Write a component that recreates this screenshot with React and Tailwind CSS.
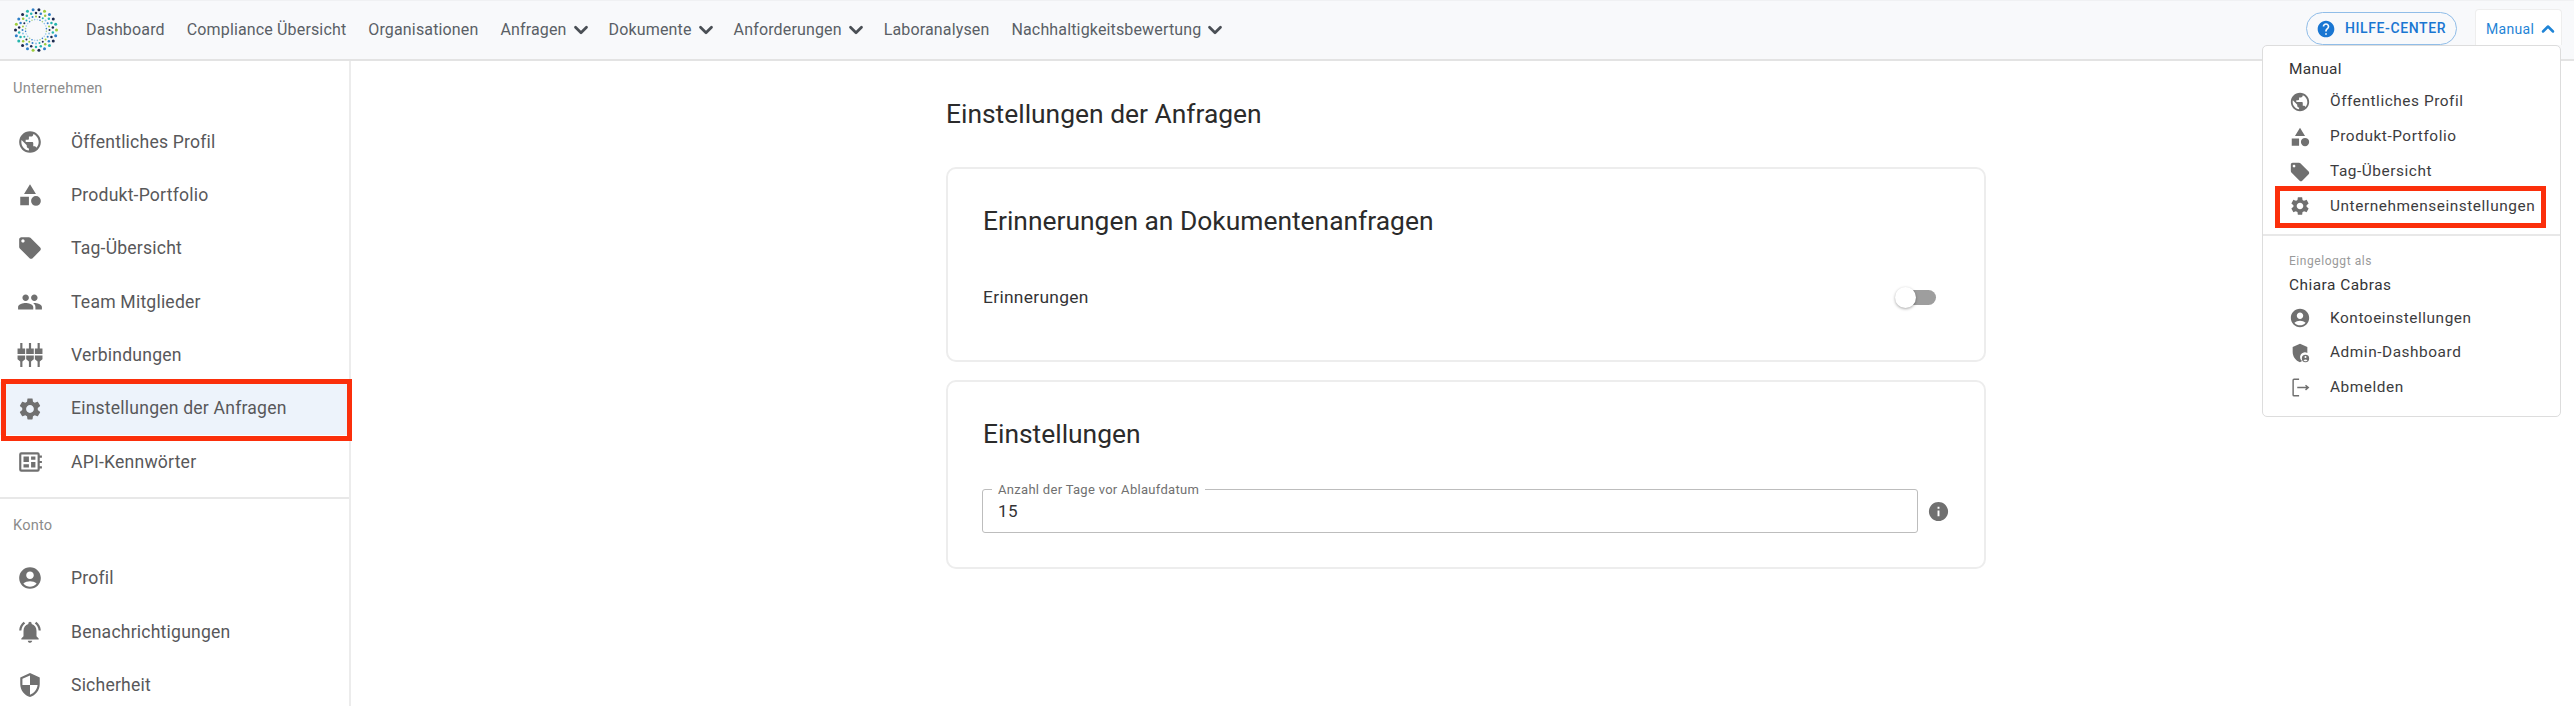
import React from "react";
import { ChevronDown, ChevronUp } from "lucide-react";

const paths = {
  globe: "M12 2C6.48 2 2 6.48 2 12s4.48 10 10 10 10-4.48 10-10S17.52 2 12 2zm-1 17.93c-3.95-.49-7-3.85-7-7.93 0-.62.08-1.21.21-1.79L9 15v1c0 1.1.9 2 2 2v1.93zm6.9-2.54c-.26-.81-1-1.39-1.9-1.39h-1v-3c0-.55-.45-1-1-1H8v-2h2c.55 0 1-.45 1-1V7h2c1.1 0 2-.9 2-2v-.41c2.93 1.19 5 4.06 5 7.41 0 2.08-.8 3.97-2.1 5.39z",
  category: "M12 2l-5.5 9h11zM17.5 13a4.5 4.5 0 1 0 0 9 4.5 4.5 0 0 0 0-9zM3 13.5h8v8H3z",
  tag: "M21.41 11.58l-9-9C12.05 2.22 11.55 2 11 2H4c-1.1 0-2 .9-2 2v7c0 .55.22 1.05.59 1.42l9 9c.36.36.86.58 1.41.58.55 0 1.05-.22 1.41-.59l7-7c.37-.36.59-.86.59-1.41 0-.55-.23-1.06-.59-1.42zM5.5 7C4.67 7 4 6.33 4 5.5S4.67 4 5.5 4 7 4.67 7 5.5 6.33 7 5.5 7z",
  people: "M16 11c1.66 0 2.99-1.34 2.99-3S17.66 5 16 5c-1.66 0-3 1.34-3 3s1.34 3 3 3zm-8 0c1.66 0 2.99-1.34 2.99-3S9.66 5 8 5C6.34 5 5 6.34 5 8s1.34 3 3 3zm0 2c-2.33 0-7 1.17-7 3.5V19h14v-2.5c0-2.33-4.67-3.5-7-3.5zm8 0c-.29 0-.62.02-.97.05 1.16.84 1.97 1.97 1.97 3.45V19h6v-2.5c0-2.33-4.67-3.5-7-3.5z",
  gear: "M19.14 12.94c.04-.3.06-.61.06-.94 0-.32-.02-.64-.07-.94l2.03-1.58c.18-.14.23-.41.12-.61l-1.92-3.32c-.12-.22-.37-.29-.59-.22l-2.39.96c-.5-.38-1.03-.7-1.62-.94l-.36-2.54c-.04-.24-.24-.41-.48-.41h-3.84c-.24 0-.43.17-.47.41l-.36 2.54c-.59.24-1.13.57-1.62.94l-2.39-.96c-.22-.08-.47 0-.59.22L2.74 8.87c-.12.21-.08.47.12.61l2.03 1.58c-.05.3-.09.63-.09.94s.02.64.07.94l-2.03 1.58c-.18.14-.23.41-.12.61l1.92 3.32c.12.22.37.29.59.22l2.39-.96c.5.38 1.03.7 1.62.94l.36 2.54c.05.24.24.41.48.41h3.84c.24 0 .44-.17.47-.41l.36-2.54c.59-.24 1.13-.56 1.62-.94l2.39.96c.22.08.47 0 .59-.22l1.92-3.32c.12-.22.07-.47-.12-.61l-2.01-1.58zM12 15.6c-1.98 0-3.6-1.62-3.6-3.6s1.62-3.6 3.6-3.6 3.6 1.62 3.6 3.6-1.62 3.6-3.6 3.6z",
  account: "M12 2C6.48 2 2 6.48 2 12s4.48 10 10 10 10-4.48 10-10S17.52 2 12 2zm0 4c1.93 0 3.5 1.57 3.5 3.5S13.93 13 12 13s-3.5-1.57-3.5-3.5S10.07 6 12 6zm0 14c-2.03 0-4.43-.82-6.14-2.88C7.55 15.8 9.68 15 12 15s4.45.8 6.14 2.12C16.43 19.18 14.03 20 12 20z",
  bell: "M7.58 4.08L6.15 2.65C3.75 4.48 2.17 7.3 2.03 10.5h2c.15-2.65 1.51-4.97 3.55-6.42zm12.39 6.42h2c-.15-3.2-1.73-6.02-4.12-7.85l-1.42 1.43c2.02 1.45 3.39 3.77 3.54 6.42zM18 11c0-3.07-1.64-5.64-4.5-6.32V4c0-.83-.67-1.5-1.5-1.5s-1.5.67-1.5 1.5v.68C7.63 5.36 6 7.92 6 11v5l-2 2v1h16v-1l-2-2v-5zm-6 11c.14 0 .27-.01.4-.04.65-.14 1.18-.58 1.44-1.18.1-.24.15-.5.15-.78h-4c.01 1.1.9 2 2.01 2z",
  shield: "M12 1L3 5v6c0 5.55 3.84 10.74 9 12 5.16-1.26 9-6.45 9-12V5l-9-4zm0 10.99h7c-.53 4.12-3.28 7.79-7 8.94V12H5V6.3l7-3.11v8.8z",
  help: "M12 2C6.48 2 2 6.48 2 12s4.48 10 10 10 10-4.48 10-10S17.52 2 12 2zm1 17h-2v-2h2v2zm2.07-7.75l-.9.92C13.45 12.9 13 13.5 13 15h-2v-.5c0-1.1.45-2.1 1.17-2.83l1.24-1.26c.37-.36.59-.86.59-1.41 0-1.1-.9-2-2-2s-2 .9-2 2H8c0-2.21 1.79-4 4-4s4 1.79 4 4c0 .88-.36 1.68-.93 2.25z",
  info: "M12 2C6.48 2 2 6.48 2 12s4.48 10 10 10 10-4.48 10-10S17.52 2 12 2zm1 15h-2v-6h2v6zm0-8h-2V7h2v2z",
  sliders: "M3 1h2v5h2.500v5H.5V6H3zM11 1h2v5h2.500v5h-7V6H11zM19 1h2v5h2.500v5h-7V6H19zM.5 12.500h7V16L5 18v5H3v-5L.5 16zM8.500 12.500h7V16L13 18v5h-2v-5l-2.500-2zM16.500 12.500h7V16L21 18v5h-2v-5l-2.500-2z",
  api: "M4 3h15a2 2 0 0 1 2 2v1h2v2h-2v3h2v2h-2v3h2v2h-2v1a2 2 0 0 1-2 2H4a2 2 0 0 1-2-2V5a2 2 0 0 1 2-2zm0 2v14h15V5zm2 2h5v5H6zm7 0h4v3h-4zm0 5h4v5h-4zm-7 2h5v3H6z",
  admin: "M12 2L4 5.500V11c0 5 3.400 9.700 8 11 .9-.25 1.700-.65 2.500-1.150A5 5 0 0 1 20 12.100V5.500zM18 14a4 4 0 1 0 0 8 4 4 0 0 0 0-8zm0 1.300a1.100 1.100 0 1 1 0 2.200 1.100 1.100 0 0 1 0-2.200zm0 5.700c-.9 0-1.700-.45-2.100-1.150.5-.6 1.300-.85 2.100-.85s1.600.25 2.100.85c-.4.700-1.200 1.150-2.100 1.150z",
};

const Icon = ({ name, size = 26, className = "text-[#707070]" }) => (
  <svg width={size} height={size} viewBox="0 0 24 24" fill="currentColor" className={`shrink-0 ${className}`}>
    <path fillRule={name === "api" ? "evenodd" : undefined} d={paths[name]} />
  </svg>
);

const LogoutIcon = ({ size = 22 }) => (
  <svg width={size} height={size} viewBox="0 0 24 24" fill="none" stroke="#707070" strokeWidth="1.6" className="shrink-0">
    <path d="M11 2.500H5.500a1 1 0 0 0-1 1v16a1 1 0 0 0 1 1H11M9 11.500h12M18 9l3 2.500-3 2.500" />
  </svg>
);

// dots of the round logo, ring by ring
const logoRings = [
  { r: 20.5, n: 22, size: 1.5, colors: ["#9ccc3c", "#2f80c8", "#1b2a4e", "#25b5ad", "#2f80c8", "#1b2a4e"] },
  { r: 17, n: 22, size: 1.25, colors: ["#25b5ad", "#1b2a4e", "#2f80c8", "#9ccc3c", "#25b5ad"] },
  { r: 13.5, n: 24, size: 1, colors: ["#8cc5e8", "#2f80c8", "#9ccc3c", "#1b2a4e", "#25b5ad"] },
  { r: 10.5, n: 24, size: 0.8, colors: ["#8cc5e8", "#b7d9ec", "#2f80c8", "#a9d18e"] },
];

const Logo = () => (
  <svg width="46" height="46" viewBox="-23 -23 46 46" className="shrink-0">
    {logoRings.map((ring, i) =>
      Array.from({ length: ring.n }).map((_, k) => {
        const a = ((k + i * 0.5) / ring.n) * Math.PI * 2;
        return (
          <circle
            key={`${i}-${k}`}
            cx={Math.cos(a) * ring.r}
            cy={Math.sin(a) * ring.r}
            r={ring.size}
            fill={ring.colors[k % ring.colors.length]}
          />
        );
      })
    )}
  </svg>
);

const NavLink = ({ label, caret }) => (
  <div className="flex items-center gap-[3px] text-[16px] tracking-[0.15px] text-[#5a5f66] whitespace-nowrap">
    {label}
    {caret && <ChevronDown size={22} strokeWidth={3} className="text-[#4a4f55] -mr-[5px]" />}
  </div>
);

const SideItem = ({ icon, label, active }) => (
  <div className={`relative h-[53.4px] flex items-center pl-[17px] gap-[28px] ${active ? "bg-[#edf3fb]" : ""}`}>
    <Icon name={icon} />
    <span className="text-[17.6px] tracking-[0.2px] text-[#58585a] whitespace-nowrap">{label}</span>
    {active && <div className="absolute left-[1px] -right-[3px] -top-[3px] -bottom-[6px] border-[5px] border-[#fb2f0b]" />}
  </div>
);

const SideLabel = ({ children }) => (
  <div className="h-[20px] leading-[20px] pl-[13px] mb-[17px] text-[14.6px] tracking-[0.2px] text-[#8c8c8c]">{children}</div>
);

const MenuItem = ({ icon, label, custom }) => (
  <div className="h-[34.8px] flex items-center pl-[26px] gap-[19px]">
    {custom || <Icon name={icon} size={22} />}
    <span className="text-[15.4px] tracking-[0.55px] text-[#3c3c3e] whitespace-nowrap">{label}</span>
  </div>
);

const App = () => {
  return (
    <div className="h-[706px] w-full overflow-hidden bg-white flex flex-col font-['Roboto',sans-serif]">
      <header className="h-[61px] shrink-0 bg-[#f8f9fb] border-t border-t-[#f0f1f3] border-b-2 border-b-[#e3e3e3] flex items-center pl-[13px] pr-[12px]">
        <Logo />
        <nav className="flex items-center gap-[22px] ml-[27px]">
          <NavLink label="Dashboard" />
          <NavLink label="Compliance Übersicht" />
          <NavLink label="Organisationen" />
          <NavLink label="Anfragen" caret />
          <NavLink label="Dokumente" caret />
          <NavLink label="Anforderungen" caret />
          <NavLink label="Laboranalysen" />
          <NavLink label="Nachhaltigkeitsbewertung" caret />
        </nav>
        <div className="ml-auto self-start pt-[8px] flex items-start gap-[18px]">
          <div className="h-[33px] w-[151px] mt-[3px] rounded-full border border-[#90bde8] flex items-center pl-[9px] gap-[9px]">
            <Icon name="help" size={20} className="text-[#1976d2]" />
            <span className="text-[14px] font-medium tracking-[0.6px] text-[#1976d2] whitespace-nowrap">HILFE-CENTER</span>
          </div>
          <div className="relative z-10 h-[36px] w-[87px] bg-white border border-[#eeeeee] border-b-0 rounded-t-[4px] flex items-center pl-[10px] gap-[4px] pt-[3px]">
            <span className="text-[14px] tracking-[0.3px] text-[#1f84d6]">Manual</span>
            <ChevronUp size={20} strokeWidth={3} className="text-[#1f84d6]" />
            <div className="absolute top-full right-0 w-[299px] h-[372px] bg-white border border-[#dddddd] rounded-[5px] pt-[13px]">
              <div className="h-[20px] leading-[20px] pl-[26px] mb-[5.6px] text-[15.4px] tracking-[0.3px] text-[#333335]">Manual</div>
              <MenuItem icon="globe" label="Öffentliches Profil" />
              <MenuItem icon="category" label="Produkt-Portfolio" />
              <MenuItem icon="tag" label="Tag-Übersicht" />
              <div className="relative">
                <MenuItem icon="gear" label="Unternehmenseinstellungen" />
                <div className="absolute left-[12px] right-[14px] -top-[3px] -bottom-[4px] border-[5px] border-[#fb2f0b]" />
              </div>
              <div className="mt-[10px] border-t-2 border-[#e8e8e8] pt-[17px]">
                <div className="h-[16px] leading-[16px] pl-[26px] text-[12px] tracking-[0.55px] text-[#9a9a9a]">Eingeloggt als</div>
                <div className="h-[20px] leading-[20px] pl-[26px] mt-[6.5px] mb-[5.5px] text-[15.4px] tracking-[0.5px] text-[#333335]">Chiara Cabras</div>
                <MenuItem icon="account" label="Kontoeinstellungen" />
                <MenuItem icon="admin" label="Admin-Dashboard" />
                <MenuItem custom={<LogoutIcon />} label="Abmelden" />
              </div>
            </div>
          </div>
        </div>
      </header>

      <div className="flex-1 flex min-h-0">
        <aside className="w-[351px] shrink-0 border-r-2 border-[#ececec] pt-[17px]">
          <SideLabel>Unternehmen</SideLabel>
          <SideItem icon="globe" label="Öffentliches Profil" />
          <SideItem icon="category" label="Produkt-Portfolio" />
          <SideItem icon="tag" label="Tag-Übersicht" />
          <SideItem icon="people" label="Team Mitglieder" />
          <SideItem icon="sliders" label="Verbindungen" />
          <SideItem icon="gear" label="Einstellungen der Anfragen" active />
          <SideItem icon="api" label="API-Kennwörter" />
          <div className="mt-[8px] border-t-2 border-[#e8e8e8] pt-[16px]">
            <SideLabel>Konto</SideLabel>
            <SideItem icon="account" label="Profil" />
            <SideItem icon="bell" label="Benachrichtigungen" />
            <SideItem icon="shield" label="Sicherheit" />
          </div>
        </aside>

        <main className="flex-1 pl-[595px] pt-[37px]">
          <div className="w-[1040px]">
            <h1 className="h-[32px] leading-[32px] text-[26.4px] text-[#2b2b2b] mb-[37px]">Einstellungen der Anfragen</h1>

            <section className="h-[195px] border-2 border-[#ededed] rounded-[10px] px-[35px] pt-[36px]">
              <h2 className="h-[32px] leading-[32px] text-[26.4px] text-[#2b2b2b]">Erinnerungen an Dokumentenanfragen</h2>
              <div className="mt-[40px] h-[40px] flex items-center justify-between pr-[13px]">
                <span className="text-[17.4px] tracking-[0.3px] text-[#333335]">Erinnerungen</span>
                <div className="relative w-[34px] h-[15px] rounded-full bg-[#9e9e9e]">
                  <div className="absolute -left-[7px] -top-[3px] w-[21px] h-[21px] rounded-full bg-white shadow-[0_1px_3px_rgba(0,0,0,0.35)]" />
                </div>
              </div>
            </section>

            <section className="h-[189px] mt-[18px] border-2 border-[#ededed] rounded-[10px] px-[34px] pt-[36px]">
              <h2 className="h-[32px] leading-[32px] text-[26.4px] text-[#2b2b2b] pl-[1px]">Einstellungen</h2>
              <div className="mt-[39px] flex items-center gap-[9px]">
                <div className="relative w-[936px] h-[44px] border border-[#bdbdbd] rounded-[3px] flex items-center pl-[15px] pt-[1px]">
                  <span className="text-[17px] tracking-[0.5px] text-[#333335]">15</span>
                  <span className="absolute left-[9px] -top-[8px] bg-white px-[6px] h-[15px] leading-[15px] text-[13px] tracking-[0.3px] text-[#707070] whitespace-nowrap">
                    Anzahl der Tage vor Ablaufdatum
                  </span>
                </div>
                <Icon name="info" size={23} />
              </div>
            </section>
          </div>
        </main>
      </div>
    </div>
  );
};

export default App;
